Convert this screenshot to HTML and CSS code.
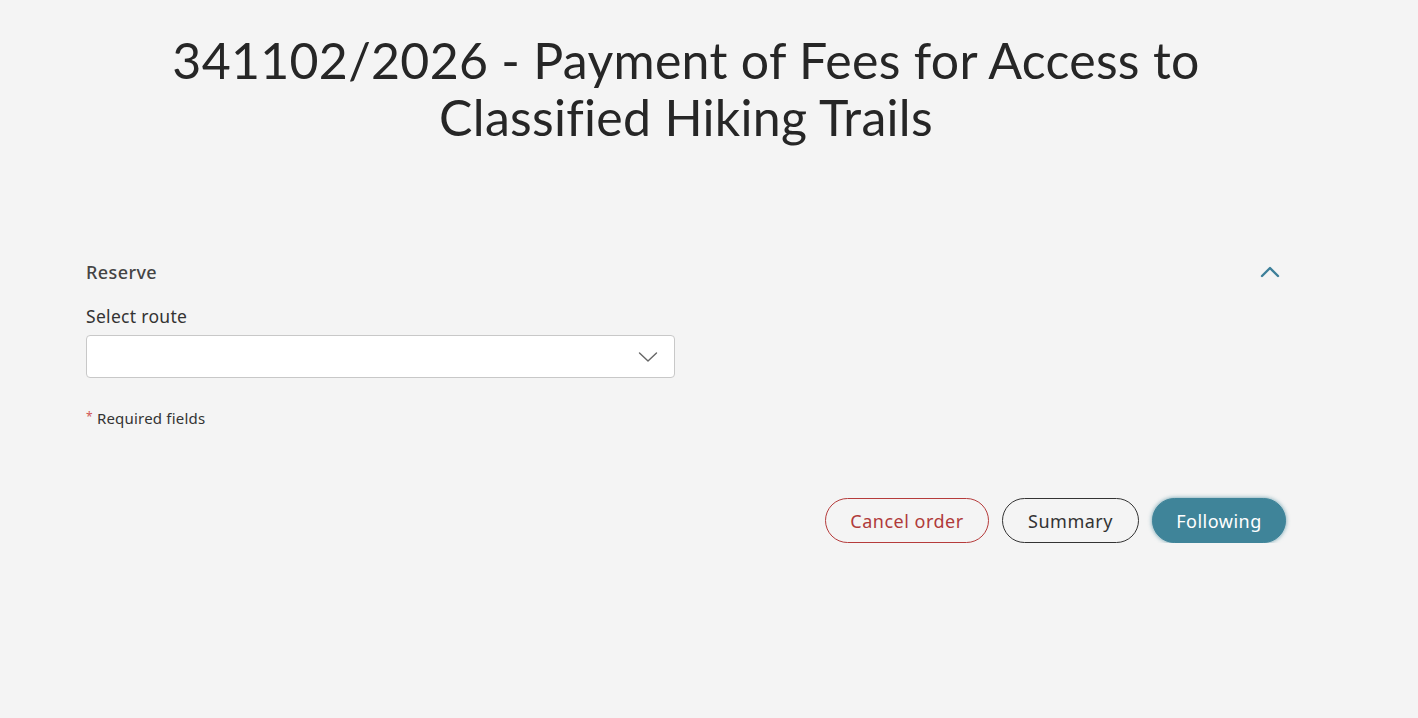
FILE: index.html
```html
<!DOCTYPE html>
<html lang="en">
<head>
<meta charset="utf-8">
<title>Payment of Fees</title>
<link rel="stylesheet" href="styles.css">
</head>
<body>
<main class="page">
  <h1 class="title">341102/2026 - Payment of Fees for Access to Classified Hiking Trails</h1>
  <section class="panel">
    <div class="panel-head">
      <span class="panel-title">Reserve</span>
      <svg class="chev-up" width="20" height="12" viewBox="0 0 20 12"><path d="M2 10 L10 2 L18 10" fill="none" stroke="#3d7f99" stroke-width="2.4" stroke-linecap="round" stroke-linejoin="round"/></svg>
    </div>
    <label class="field-label">Select route</label>
    <div class="select">
      <svg class="chev-down" width="20" height="12" viewBox="0 0 20 12"><path d="M1.5 2 L10 10 L18.5 2" fill="none" stroke="#666" stroke-width="1.4" stroke-linecap="round" stroke-linejoin="round"/></svg>
    </div>
    <p class="required"><span class="star">*</span> Required fields</p>
  </section>
  <div class="actions">
    <button class="btn btn-cancel">Cancel order</button>
    <button class="btn btn-summary">Summary</button>
    <button class="btn btn-next">Following</button>
  </div>
</main>
</body>
</html>
```
FILE: styles.css
```css
html, body {
  margin: 0;
  padding: 0;
  background: #f4f4f4;
}
body {
  font-family: "Noto Sans", "Lato", sans-serif;
  color: #2a2a2a;
}
.page {
  width: 1200px;
  margin: 0 0 0 86px;
  padding-top: 32px;
}
.title {
  margin: 0 auto;
  max-width: 1120px;
  text-align: center;
  font-family: "Lato", sans-serif;
  font-weight: 400;
  font-size: 50px;
  line-height: 57px;
  color: #262626;
  letter-spacing: 0.3px;
}
.panel {
  margin-top: 114px;
}
.panel-head {
  display: flex;
  justify-content: space-between;
  align-items: center;
  height: 24px;
  padding-right: 6px;
}
.panel-title {
  font-size: 18px;
  font-weight: 500;
  color: #444;
  letter-spacing: 0.4px;
}
.chev-up {
  display: block;
}
.field-label {
  display: block;
  margin-top: 21px;
  font-size: 17.5px;
  color: #333;
  line-height: 22px;
  letter-spacing: 0.3px;
}
.select {
  margin-top: 8px;
  width: 571px;
  height: 41px;
  background: #fff;
  border: 1px solid #c8c8c8;
  border-radius: 4px;
  display: flex;
  align-items: center;
  justify-content: flex-end;
  padding-right: 16px;
  box-sizing: content-box;
}
.required {
  margin: 30px 0 0;
  font-size: 15px;
  color: #333;
  letter-spacing: 0.2px;
}
.star {
  color: #d05555;
  font-size: 12px;
  vertical-align: 3px;
}
.actions {
  display: flex;
  justify-content: flex-end;
  gap: 13px;
  margin-top: 70px;
}
.btn {
  font-family: "Noto Sans", sans-serif;
  font-size: 18px;
  height: 45px;
  border-radius: 23px;
  padding: 0 16px;
  background: transparent;
  cursor: pointer;
  letter-spacing: 0.5px;
}
.btn-cancel {
  border: 1px solid #b53b3b;
  color: #b03a3a;
  width: 164px;
}
.btn-summary {
  border: 1px solid #333;
  color: #333;
  width: 137px;
}
.btn-next {
  border: 1px solid #3f8499;
  background: #3f8499;
  color: #fff;
  width: 134px;
  box-shadow: 0 0 4px rgba(63, 132, 153, 0.8);
}
```
